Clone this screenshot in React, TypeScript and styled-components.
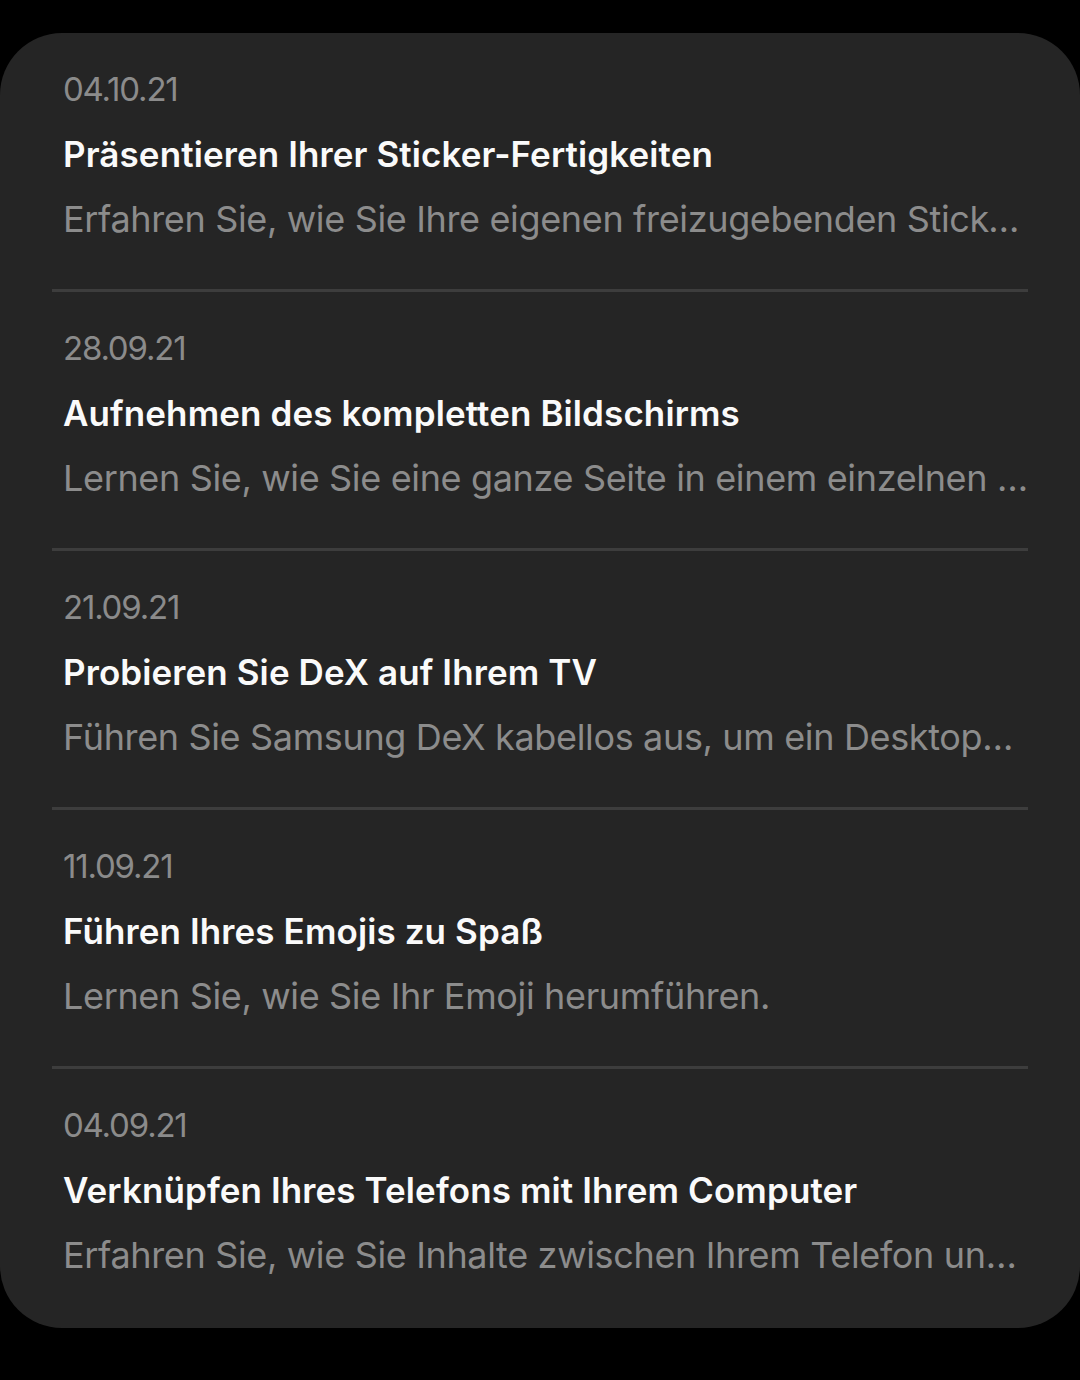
import React from "react";
import styled, { createGlobalStyle } from "styled-components";

const Global = createGlobalStyle`
  html, body { margin: 0; padding: 0; background: #000; }
  body { font-family: Inter, "Noto Sans", sans-serif; -webkit-font-smoothing: antialiased; }
`;

const Page = styled.div`
  width: 1080px;
  height: 1380px;
  background: #000;
  padding-top: 33px;
  box-sizing: border-box;
`;

const Card = styled.div`
  background: #252525;
  border-radius: 62px;
  padding: 0 52px 3px;
  display: flex;
  flex-direction: column;
`;

const Item = styled.div<{ $last?: boolean }>`
  padding: 24px 0 37px 11px;
  border-bottom: ${(p) => (p.$last ? "none" : "3px solid #3d3d3d")};
  display: flex;
  flex-direction: column;
  min-width: 0;
`;

const DateText = styled.div`
  font-size: 33px;
  line-height: 65px;
  color: #8b8b8b;
  letter-spacing: -1.2px;
`;

const Title = styled.div`
  font-size: 35px;
  line-height: 65px;
  font-weight: 600;
  color: #fafafa;
  letter-spacing: 0.1px;
  white-space: nowrap;
`;

const Desc = styled.div`
  font-size: 36px;
  line-height: 65px;
  color: #8c8c8c;
  letter-spacing: -0.35px;
  white-space: nowrap;
  overflow: hidden;
  text-overflow: ellipsis;
  margin-right: -4px;
`;

const items = [
  {
    date: "04.10.21",
    title: "Präsentieren Ihrer Sticker-Fertigkeiten",
    desc: "Erfahren Sie, wie Sie Ihre eigenen freizugebenden Sticker erstellen können.",
  },
  {
    date: "28.09.21",
    title: "Aufnehmen des kompletten Bildschirms",
    desc: "Lernen Sie, wie Sie eine ganze Seite in einem einzelnen Screenshot aufnehmen.",
  },
  {
    date: "21.09.21",
    title: "Probieren Sie DeX auf Ihrem TV",
    desc: "Führen Sie Samsung DeX kabellos aus, um ein Desktoperlebnis zu erhalten.",
  },
  {
    date: "11.09.21",
    title: "Führen Ihres Emojis zu Spaß",
    desc: "Lernen Sie, wie Sie Ihr Emoji herumführen.",
  },
  {
    date: "04.09.21",
    title: "Verknüpfen Ihres Telefons mit Ihrem Computer",
    desc: "Erfahren Sie, wie Sie Inhalte zwischen Ihrem Telefon und Computer teilen.",
  },
];

export default function App() {
  return (
    <Page>
      <Global />
      <Card>
        {items.map((it, i) => (
          <Item key={it.date} $last={i === items.length - 1}>
            <DateText>{it.date}</DateText>
            <Title>{it.title}</Title>
            <Desc>{it.desc}</Desc>
          </Item>
        ))}
      </Card>
    </Page>
  );
}
